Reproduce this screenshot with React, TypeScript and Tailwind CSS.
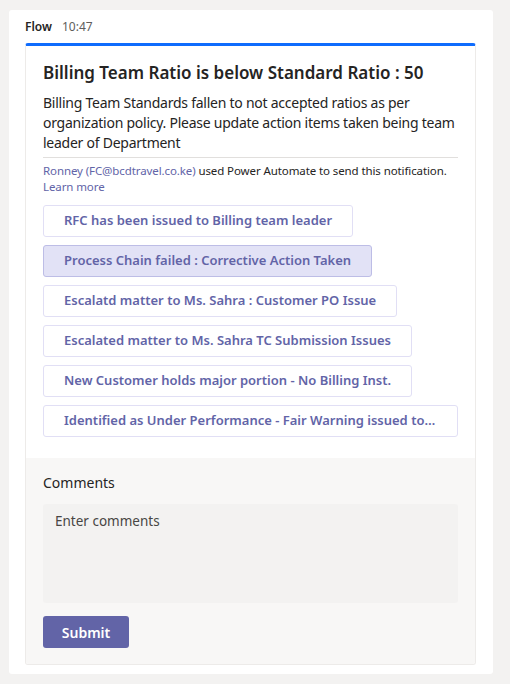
import React from "react";

const actions = [
  { label: "RFC has been issued to Billing team leader", active: false },
  { label: "Process Chain failed : Corrective Action Taken", active: true },
  { label: "Escalatd matter to Ms. Sahra : Customer PO Issue", active: false },
  { label: "Escalated matter to Ms. Sahra TC Submission Issues", active: false },
  { label: "New Customer holds major portion - No Billing Inst.", active: false },
  { label: "Identified as Under Performance - Fair Warning issued to team leader", active: false },
];

const App = () => {
  return (
    <div
      className="min-h-[684px] bg-[#f3f2f1] pt-[10px] pl-[9px]"
      style={{ fontFamily: '"Segoe UI", "Noto Sans", sans-serif' }}
    >
      <div className="w-[484px] h-[664px] bg-white rounded-[3px] pl-[16px] pr-[17px]">
        {/* header */}
        <div className="flex items-center h-[33px] pt-[1px] text-[12px] leading-none">
          <span className="font-semibold text-[#252423]">Flow</span>
          <span className="ml-[10px] text-[#605e5c]">10:47</span>
        </div>

        {/* card */}
        <div className="w-[451px] h-[622px] flex flex-col border border-[#edebe9] border-t-[3px] border-t-[#0f6cfd] rounded-[3px] overflow-hidden">
          <div className="px-[17px] pt-[14px] pb-[21px]">
            <h1 className="text-[17px] leading-[26px] font-semibold text-[#252423]">
              Billing Team Ratio is below Standard Ratio : 50
            </h1>
            <p className="mt-[7px] text-[14px] leading-[20px] tracking-[-0.25px] text-[#252423]">
              Billing Team Standards fallen to not accepted ratios as per organization policy. Please update action items taken being team leader of Department
            </p>
            <div className="mt-[4px] border-t border-[#e1dfdd]" />
            <p className="mt-[5px] text-[11.5px] leading-[16px] tracking-[-0.1px] text-[#252423]">
              <span className="text-[#6264a7]">Ronney (FC@bcdtravel.co.ke)</span> used Power Automate to send this notification.{" "}
              <span className="text-[#6264a7]">Learn more</span>
            </p>

            <div className="mt-[10px] flex flex-col items-start gap-[8px]">
              {actions.map((a) => (
                <button
                  key={a.label}
                  className={`max-w-full h-[32px] px-[20px] rounded-[3px] border text-[13px] font-semibold text-[#6264a7] whitespace-nowrap overflow-hidden text-ellipsis text-left ${
                    a.active ? "bg-[#e2e2f6] border-[#bdbde6]" : "bg-white border-[#e1dff5]"
                  }`}
                >
                  {a.label}
                </button>
              ))}
            </div>
          </div>

          <div className="flex-1 bg-[#f8f7f6] px-[17px] pt-[16px]">
            <div className="text-[14px] leading-[18px] text-[#252423]">Comments</div>
            <textarea
              placeholder="Enter comments"
              className="mt-[12px] block w-full h-[99px] resize-none rounded-[3px] bg-[#f3f2f1] px-[12px] py-[7px] text-[13.5px] leading-[20px] text-[#252423] placeholder:text-[#484644] outline-none"
            />
            <button className="mt-[13px] w-[86px] h-[32px] rounded-[3px] bg-[#6264a7] text-white text-[14px] font-semibold">
              Submit
            </button>
          </div>
        </div>
      </div>
    </div>
  );
};

export default App;
